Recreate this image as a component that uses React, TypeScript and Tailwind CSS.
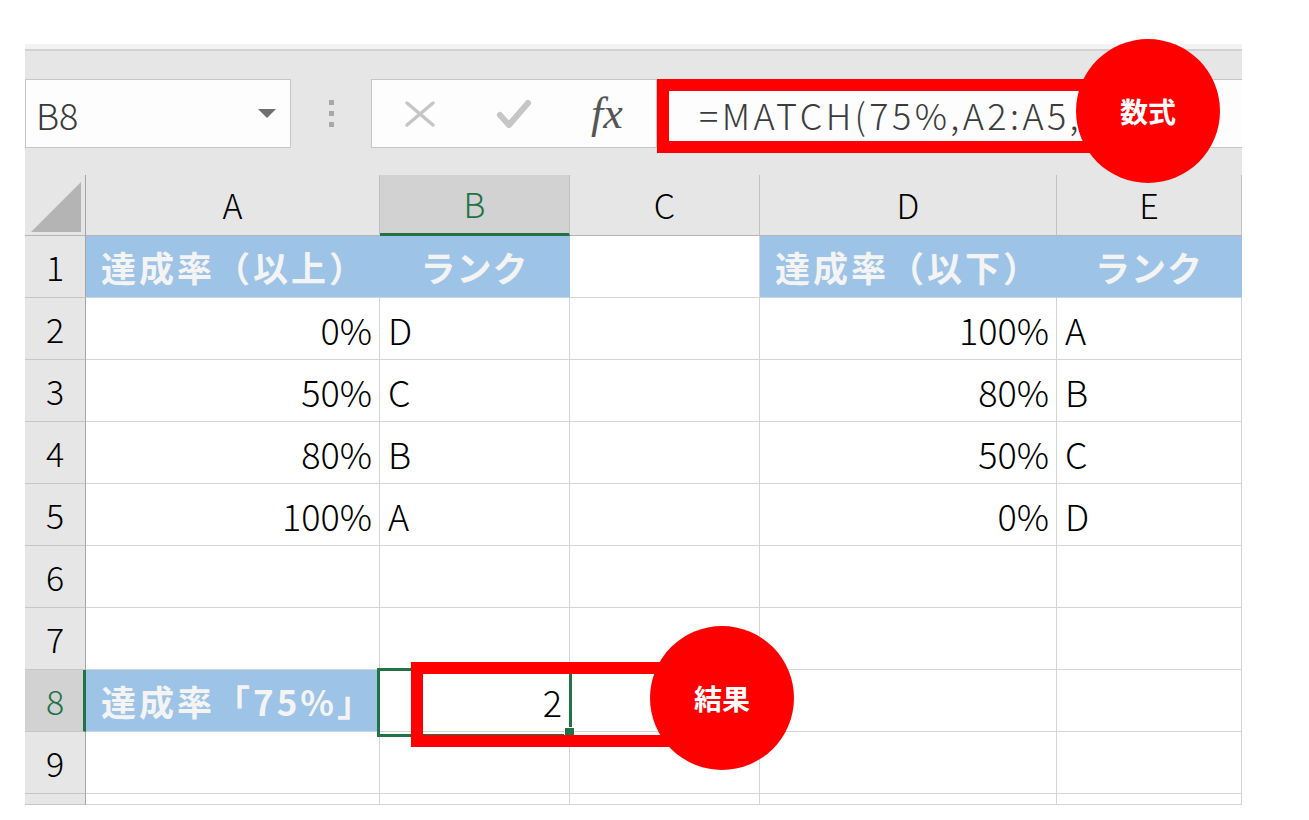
import React from 'react'

const FONT = "font-['Noto_Sans_CJK_JP','Noto_Sans',sans-serif]"

type Cell = {
  text?: string
  align?: 'left' | 'right' | 'center'
  blue?: boolean
}

const COLS = ['A', 'B', 'C', 'D', 'E']

const rows: Cell[][] = [
  [
    { text: '達成率（以上）', align: 'left', blue: true },
    { text: 'ランク', align: 'center', blue: true },
    {},
    { text: '達成率（以下）', align: 'left', blue: true },
    { text: 'ランク', align: 'center', blue: true },
  ],
  [{ text: '0%', align: 'right' }, { text: 'D' }, {}, { text: '100%', align: 'right' }, { text: 'A' }],
  [{ text: '50%', align: 'right' }, { text: 'C' }, {}, { text: '80%', align: 'right' }, { text: 'B' }],
  [{ text: '80%', align: 'right' }, { text: 'B' }, {}, { text: '50%', align: 'right' }, { text: 'C' }],
  [{ text: '100%', align: 'right' }, { text: 'A' }, {}, { text: '0%', align: 'right' }, { text: 'D' }],
  [{}, {}, {}, {}, {}],
  [{}, {}, {}, {}, {}],
  [{ text: '達成率「75%」', align: 'left', blue: true }, { text: '2', align: 'right' }, {}, {}, {}],
  [{}, {}, {}, {}, {}],
  [{}, {}, {}, {}, {}],
]

function GridCell({ cell }: { cell: Cell }) {
  const justify =
    cell.align === 'right'
      ? 'justify-end pr-[7px]'
      : cell.align === 'center'
        ? 'justify-center tracking-[1px]'
        : cell.blue
          ? 'justify-start pl-[15px] tracking-[3px]'
          : 'justify-start pl-[8px]'
  return (
    <div
      className={`flex items-center overflow-hidden whitespace-nowrap border-r border-b ${justify} ${
        cell.blue
          ? 'bg-[#9dc3e6] border-r-[#9dc3e6] border-b-[#c4d8ec] text-[#f4f4f4] font-bold text-[35px]'
          : 'bg-white border-[#d4d4d4] text-black font-light text-[36px]'
      }`}
    >
      {cell.text}
    </div>
  )
}

export default function App() {
  return (
    <div className={`relative w-[1309px] h-[820px] overflow-hidden bg-white ${FONT}`}>
      <div className="ml-[25px] pt-[44px] w-[1217px]">
        <div className="h-[5px] bg-[#f3f3f3]" />
        <div className="h-[2px] bg-[#d2d2d2]" />
        <div className="flex h-[124px] items-start bg-[#e6e6e6] pt-[28px]">
          <div className="flex h-[69px] w-[266px] items-center justify-between border border-[#c6c6c6] bg-[#fdfdfd] pl-[10px] pr-[14px]">
            <span className="text-[36px] font-light leading-none text-[#3a3a3a]">B8</span>
            <svg width="18" height="9" viewBox="0 0 18 9">
              <path d="M0 0 L18 0 L9 9 Z" fill="#6f6f6f" />
            </svg>
          </div>
          <div className="flex h-[69px] w-[80px] flex-col items-center justify-center gap-[6px]">
            <div className="h-[5px] w-[5px] bg-[#a8a8a8]" />
            <div className="h-[5px] w-[5px] bg-[#a8a8a8]" />
            <div className="h-[5px] w-[5px] bg-[#a8a8a8]" />
          </div>
          <div className="flex h-[69px] w-[286px] items-center border border-[#c6c6c6] bg-[#fdfdfd]">
            <div className="flex w-[96px] justify-center">
              <svg width="32" height="28" viewBox="0 0 32 28">
                <path d="M3 3 L29 25 M29 3 L3 25" stroke="#c6c6c6" strokeWidth="3.5" strokeLinecap="round" />
              </svg>
            </div>
            <div className="flex w-[92px] justify-center">
              <svg width="36" height="32" viewBox="0 0 36 32">
                <path d="M4 17 L13 27 L32 5" stroke="#c6c6c6" strokeWidth="6" fill="none" strokeLinecap="round" strokeLinejoin="round" />
              </svg>
            </div>
            <div className="flex w-[94px] justify-center">
              <span className="font-['Liberation_Serif',serif] text-[44px] italic leading-none text-[#555555]">fx</span>
            </div>
          </div>
          <div className="flex h-[69px] flex-1 items-center border-y border-[#c6c6c6] bg-[#fdfdfd] pl-[42px]">
            <span className="whitespace-nowrap text-[36px] font-light leading-none tracking-[3.4px] text-[#3c3c3c]">
              =MATCH(75%,A2:A5,1)
            </span>
          </div>
        </div>

        <div className="grid grid-cols-[61px_294px_190px_190px_297px_185px] grid-rows-[61px_repeat(9,62px)_11px] leading-none">
          <div className="flex items-end justify-end border-r border-b border-r-[#a6a6a6] border-b-[#b4b4b4] bg-[#e6e6e6] pb-[3px] pr-[4px]">
            <svg width="50" height="50" viewBox="0 0 50 50">
              <path d="M50 0 L50 50 L0 50 Z" fill="#b4b4b4" />
            </svg>
          </div>
          {COLS.map((c) =>
            c === 'B' ? (
              <div
                key={c}
                className="flex items-center justify-center border-r border-r-[#c0c0c0] border-b-[3px] border-b-[#217346] bg-[#d2d2d2] text-[34px] font-light text-[#217346]"
              >
                {c}
              </div>
            ) : (
              <div
                key={c}
                className="flex items-center justify-center border-r border-b border-r-[#c0c0c0] border-b-[#b4b4b4] bg-[#e6e6e6] text-[34px] font-light text-black"
              >
                {c}
              </div>
            )
          )}
          {rows.map((row, i) => (
            <React.Fragment key={i}>
              {i === 7 ? (
                <div className="flex items-center justify-center border-r-[3px] border-b border-r-[#217346] border-b-[#c6c6c6] bg-[#d2d2d2] pl-[2px] text-[34px] font-light text-[#217346]">
                  8
                </div>
              ) : (
                <div className="flex items-center justify-center border-r border-b border-r-[#a6a6a6] border-b-[#c6c6c6] bg-[#e6e6e6] text-[34px] font-light text-black">
                  {i < 9 ? i + 1 : ''}
                </div>
              )}
              {row.map((cell, j) => (
                <GridCell key={j} cell={cell} />
              ))}
            </React.Fragment>
          ))}
        </div>
      </div>

      {/* selection border for B8 */}
      <div className="absolute left-[377px] top-[668px] h-[69px] w-[195px] border-[3px] border-[#217346]" />
      <div className="absolute left-[564px] top-[727px] h-[10px] w-[11px] border border-white bg-[#217346]" />

      {/* red callouts */}
      <div className="absolute left-[657px] top-[79px] h-[74px] w-[480px] border-[12px] border-[#ff0000]" />
      <div className="absolute left-[411px] top-[662px] h-[85px] w-[300px] border-[12px] border-[#ff0000]" />
      <div className="absolute left-[1076px] top-[39px] flex h-[144px] w-[144px] items-center justify-center rounded-full bg-[#ff0000] text-[28px] font-bold text-white">
        数式
      </div>
      <div className="absolute left-[650px] top-[626px] flex h-[144px] w-[144px] items-center justify-center rounded-full bg-[#ff0000] text-[28px] font-bold text-white">
        結果
      </div>
    </div>
  )
}
